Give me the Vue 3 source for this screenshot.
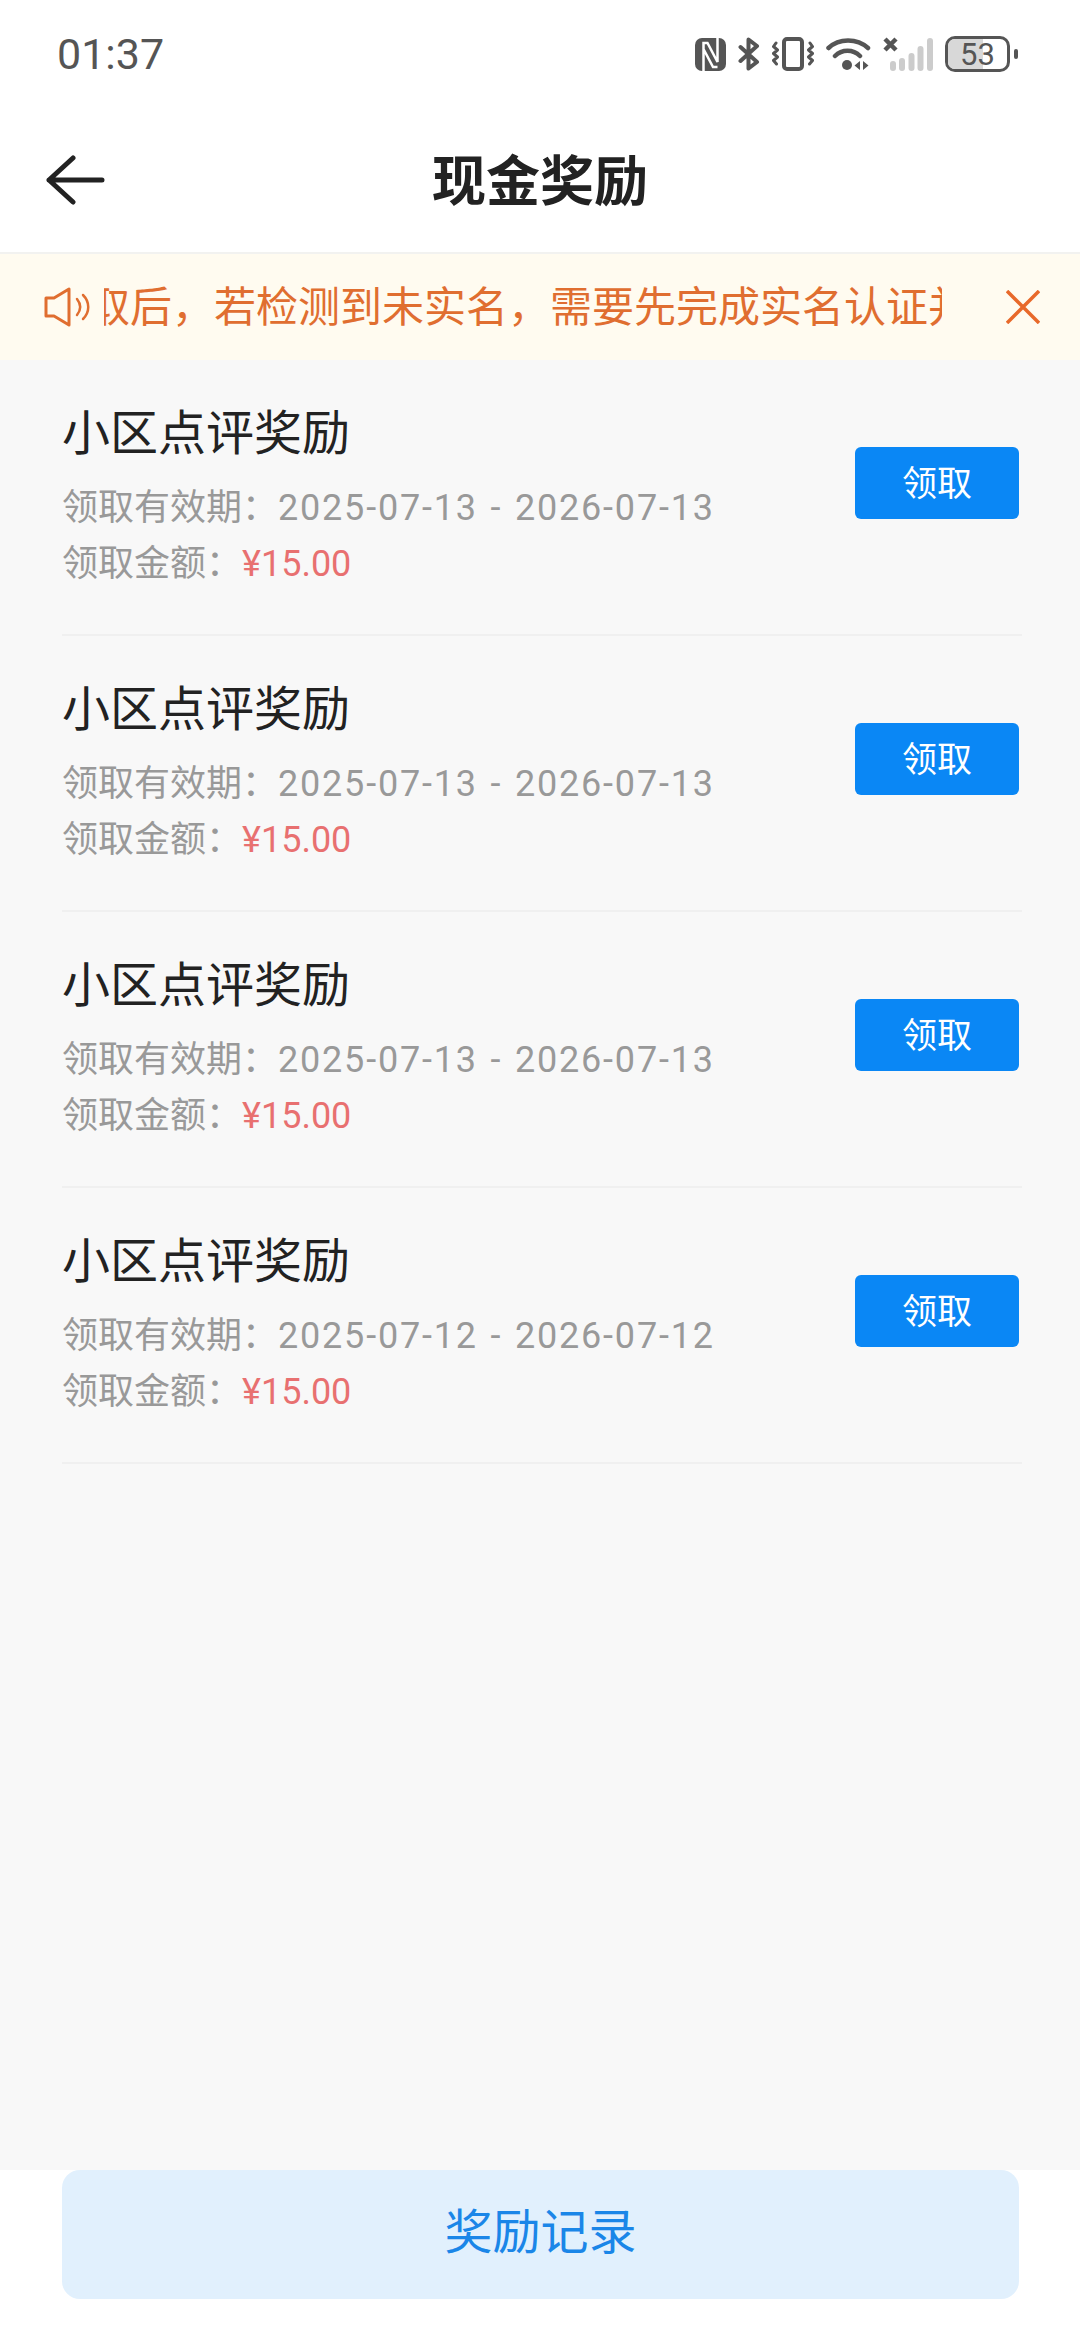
<template>
  <div class="page">
    <div class="status-bar">
      <span class="time">01:37</span>
      <div class="status-icons">
        <svg width="31" height="33" viewBox="0 0 31 33">
          <rect x="0" y="0" width="31" height="33" rx="7" fill="#555" />
          <path d="M8.500 33 V5 H12.500 L22.500 24 V0 M8.500 11 L18 29 H22.500" fill="none" stroke="#fff" stroke-width="2.500" />
        </svg>
        <svg width="22" height="34" viewBox="0 0 22 34">
          <path d="M2.500 10 L19 25 L10.500 31.500 V2.500 L19 9 L2.500 24" fill="none" stroke="#555" stroke-width="4" stroke-linejoin="round" stroke-linecap="round" />
        </svg>
        <svg width="42" height="34" viewBox="0 0 42 34">
          <rect x="12" y="2" width="18" height="30" rx="3" fill="none" stroke="#555" stroke-width="4" />
          <path d="M4 6 l-2.500 3.500 l4 3.500 l-4 3.500 l4 3.500 l-4 3.500 l3 3.500 M38 6 l2.500 3.500 l-4 3.500 l4 3.500 l-4 3.500 l4 3.500 l-3 3.500" fill="none" stroke="#555" stroke-width="3" stroke-linecap="round" stroke-linejoin="round" />
        </svg>
        <svg width="45" height="34" viewBox="0 0 45 34">
          <path d="M2.500 11 C13 1 31 1 42 11 M9 19 C16 12 27 12 34 19" fill="none" stroke="#555" stroke-width="4.500" stroke-linecap="round" />
          <circle cx="21" cy="28" r="5" fill="#555" />
          <path d="M34 24 v9 l-5.500 -4.500 z M37 24 v9 l5.500 -4.500 z" fill="#555" />
        </svg>
        <svg width="50" height="34" viewBox="0 0 50 34">
          <path d="M2 2 L13 13 M13 2 L2 13" stroke="#555" stroke-width="4.500" />
          <rect x="7" y="24" width="6" height="10" rx="3" fill="#ccc" />
          <rect x="16" y="21" width="6" height="13" rx="3" fill="#ccc" />
          <rect x="25.500" y="16" width="6" height="18" rx="3" fill="#ccc" />
          <rect x="34.500" y="9" width="6" height="25" rx="3" fill="#ccc" />
          <rect x="44" y="1" width="6" height="33" rx="3" fill="#ccc" />
        </svg>
        <div class="battery">
          <div class="battery-body">
            <div class="battery-fill"></div>
            <span class="battery-num">53</span>
          </div>
          <div class="battery-tip"></div>
        </div>
      </div>
    </div>

    <header class="nav">
      <svg class="back" width="62" height="50" viewBox="0 0 62 50">
        <path d="M58 25 H5 M29 3 L5 25 L29 47" fill="none" stroke="#222" stroke-width="5" stroke-linecap="round" stroke-linejoin="round" />
      </svg>
      <h1>现金奖励</h1>
    </header>

    <div class="notice">
      <svg class="horn" width="48" height="40" viewBox="0 0 48 40">
        <path d="M2 11 H10 L25 2 V38 L10 29 H2 Z" fill="none" stroke="#e06e30" stroke-width="3" stroke-linejoin="round" />
        <path d="M33 12 C37 17 37 23 33 28 M39 8 C46 15 46 25 39 32" fill="none" stroke="#e06e30" stroke-width="2.500" stroke-linecap="round" />
      </svg>
      <div class="notice-track">
        <span class="notice-text">领取后，若检测到未实名，需要先完成实名认证并绑定提现账户</span>
      </div>
      <svg class="close" width="34" height="34" viewBox="0 0 34 34">
        <path d="M1 1 L33 33 M33 1 L1 33" stroke="#e8692a" stroke-width="3.500" />
      </svg>
    </div>

    <main class="list">
      <div v-for="item in rewards" :key="item.id" class="row">
        <div class="row-info">
          <div class="row-title">小区点评奖励</div>
          <div class="row-line">领取有效期：<span class="num date">{{ item.start }} - {{ item.end }}</span></div>
          <div class="row-line">领取金额：<span class="num money">¥15.00</span></div>
        </div>
        <button class="claim">领取</button>
      </div>
    </main>

    <footer class="footer">
      <button class="record">奖励记录</button>
    </footer>
  </div>
</template>

<script setup>
const rewards = [
  { id: 1, start: "2025-07-13", end: "2026-07-13" },
  { id: 2, start: "2025-07-13", end: "2026-07-13" },
  { id: 3, start: "2025-07-13", end: "2026-07-13" },
  { id: 4, start: "2025-07-12", end: "2026-07-12" },
];
</script>

<style>
html,
body {
  margin: 0;
  background: #fff;
}
</style>

<style scoped>
.page {
  width: 1080px;
  height: 2340px;
  display: flex;
  flex-direction: column;
  font-family: "Noto Sans CJK SC", sans-serif;
  background: #f8f8f8;
  overflow: hidden;
}
.status-bar {
  height: 108px;
  padding: 0 62px 0 57px;
  display: flex;
  align-items: center;
  justify-content: space-between;
  background: #fff;
}
.time {
  font-family: Roboto, sans-serif;
  font-size: 43px;
  color: #555;
}
.status-icons {
  display: flex;
  align-items: center;
  gap: 12px;
}
.battery {
  display: flex;
  align-items: center;
  gap: 4px;
}
.battery-body {
  position: relative;
  width: 65px;
  height: 36px;
  box-sizing: border-box;
  border: 3.5px solid #555;
  border-radius: 10px;
  overflow: hidden;
  display: flex;
  align-items: center;
  justify-content: center;
}
.battery-fill {
  position: absolute;
  left: 0;
  top: 0;
  bottom: 0;
  width: 60%;
  background: #d8d8d8;
}
.battery-num {
  position: relative;
  font-family: Roboto, sans-serif;
  font-size: 31px;
  color: #555;
}
.battery-tip {
  width: 4px;
  height: 10px;
  border-radius: 2px;
  background: #555;
}
.nav {
  height: 144px;
  display: flex;
  align-items: center;
  justify-content: center;
  position: relative;
  background: #fff;
  border-bottom: 2px solid #f2f2f0;
}
.nav h1 {
  margin: 0 0 6px;
  font-size: 54px;
  font-weight: 700;
  color: #222;
}
.back {
  position: absolute;
  left: 44px;
  top: 47px;
}
.notice {
  height: 106px;
  padding: 0 40px 0 44px;
  display: flex;
  align-items: center;
  background: #fffbf0;
  color: #e06e30;
}
.horn {
  flex: none;
}
.notice-track {
  width: 838px;
  margin-left: 12px;
  padding-bottom: 7px;
  overflow: hidden;
  white-space: nowrap;
}
.notice-text {
  display: inline-block;
  margin-left: -58px;
  font-size: 42px;
}
.close {
  flex: none;
  margin-left: 64px;
}
.list {
  flex: 1;
  padding: 0 58px 0 62px;
}
.row {
  height: 276px;
  box-sizing: border-box;
  padding: 34px 3px 0 0;
  display: flex;
  align-items: flex-start;
  justify-content: space-between;
  border-bottom: 2px solid #f0f0f0;
}
.row-info {
  display: flex;
  flex-direction: column;
}
.row-title {
  font-size: 48px;
  line-height: 70px;
  color: #222;
  margin-bottom: 12px;
}
.row-line {
  height: 56px;
  font-size: 36px;
  line-height: 56px;
  color: #999;
}
.num {
  font-family: Roboto, "Noto Sans CJK SC", sans-serif;
}
.date {
  letter-spacing: 1.8px;
  word-spacing: 2px;
}
.money {
  color: #e87070;
}
.claim {
  width: 164px;
  height: 72px;
  margin-top: 53px;
  border: none;
  border-radius: 6px;
  background: #0a87f5;
  color: #fff;
  font-family: inherit;
  font-size: 35px;
  padding: 0 0 5px;
}
.footer {
  height: 170px;
  padding: 0 61px 41px 62px;
  background: #fff;
  box-sizing: border-box;
}
.record {
  display: block;
  width: 100%;
  height: 129px;
  border: none;
  border-radius: 18px;
  background: #e1f0fd;
  color: #1a86e8;
  font-family: inherit;
  font-size: 48px;
  padding: 0 0 14px;
}
</style>
